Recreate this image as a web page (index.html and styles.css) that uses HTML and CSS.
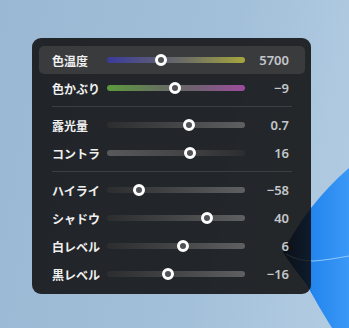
FILE: index.html
```html
<!DOCTYPE html>
<html lang="ja">
<head>
    <meta charset="UTF-8">
    <meta name="viewport" content="width=device-width, initial-scale=1.0">
    <title>調整</title>
    <link rel="stylesheet" href="styles.css">
</head>
<body>

<svg class="wallpaper" width="349" height="328" viewBox="0 0 349 328">
    <defs>
        <linearGradient id="bloom" gradientUnits="userSpaceOnUse" x1="283" y1="250" x2="349" y2="250">
            <stop offset="0" stop-color="#0b2f5c"/>
            <stop offset="0.35" stop-color="#1a6fd0"/>
            <stop offset="0.45" stop-color="#2486ee"/>
            <stop offset="1" stop-color="#3a98f6"/>
        </linearGradient>
    </defs>
    <path d="M283 252 C 292 236, 300 222, 311 208 C 322 194, 335 180, 349 168 L 349 328 L 332 328 C 322 312, 314 298, 307 285 C 298 274, 290 263, 283 252 Z" fill="url(#bloom)"/>
    <path d="M286 254 C 296 260, 306 261, 314 261 C 326 260, 338 258, 349 256" stroke="#8cc8ff" stroke-width="1.2" fill="none"/>
</svg>

<div class="panel">
    <div class="row active">
        <span class="label">色温度</span>
        <div class="track temp"><span class="thumb" style="left: 39.1%"></span></div>
        <span class="value">5700</span>
    </div>
    <div class="row">
        <span class="label">色かぶり</span>
        <div class="track tint"><span class="thumb" style="left: 49.3%"></span></div>
        <span class="value">−9</span>
    </div>

    <div class="divider"></div>

    <div class="row">
        <span class="label">露光量</span>
        <div class="track up"><span class="thumb" style="left: 59.4%"></span></div>
        <span class="value">0.7</span>
    </div>
    <div class="row">
        <span class="label">コントラ</span>
        <div class="track down"><span class="thumb" style="left: 60.1%"></span></div>
        <span class="value">16</span>
    </div>

    <div class="divider"></div>

    <div class="row">
        <span class="label">ハイライ</span>
        <div class="track up"><span class="thumb" style="left: 23.2%"></span></div>
        <span class="value">−58</span>
    </div>
    <div class="row">
        <span class="label">シャドウ</span>
        <div class="track up"><span class="thumb" style="left: 72.5%"></span></div>
        <span class="value">40</span>
    </div>
    <div class="row">
        <span class="label">白レベル</span>
        <div class="track up"><span class="thumb" style="left: 55.1%"></span></div>
        <span class="value">6</span>
    </div>
    <div class="row">
        <span class="label">黒レベル</span>
        <div class="track up"><span class="thumb" style="left: 44.2%"></span></div>
        <span class="value">−16</span>
    </div>
</div>

</body>
</html>
```

FILE: styles.css
```css
/* Basic Reset */
* {
    margin: 0;
    padding: 0;
    box-sizing: border-box;
}

body {
    width: 349px;
    height: 328px;
    overflow: hidden;
    position: relative;
    padding: 38px 0 0 32px;
    background: linear-gradient(100deg, #9ab8d3 0%, #a3c0da 60%, #b3cde2 100%);
    font-family: "Noto Sans", "Noto Sans CJK JP", sans-serif;
}

/* Desktop bloom behind the panel */
.wallpaper {
    position: absolute;
    left: 0;
    top: 0;
}

/* Translucent panel: the wallpaper shows through a little */
.panel {
    position: relative;
    width: 279px;
    padding: 8px 6px 6px 7px;
    background-color: rgba(12, 11, 11, 0.85);
    border-radius: 9px;
}

.row {
    display: grid;
    grid-template-columns: 55px 138px 1fr;
    align-items: center;
    height: 28px;
    padding: 0 16px 0 13px;
    border-radius: 5px;
}

.row.active {
    background-color: #3a3b3d;
}

.label {
    font-family: "Noto Sans CJK JP", sans-serif;
    font-size: 12px;
    font-weight: bold;
    color: #f0f0f0;
    white-space: nowrap;
}

.value {
    text-align: right;
    font-size: 13px;
    font-weight: 600;
    color: #c4c7cb;
}

/* Slider */
.track {
    position: relative;
    height: 6px;
    border-radius: 3px;
}

.track.temp {
    background: linear-gradient(90deg, #3a3a9c 0%, #5a5a78 35%, #6c6c66 55%, #a6a63e 100%);
}

.track.tint {
    background: linear-gradient(90deg, #5b9a3c 0%, #667060 40%, #6c626c 60%, #9c4c9c 100%);
}

.track.up {
    background: linear-gradient(90deg, #2c2d2f 0%, #444547 50%, #5f6062 100%);
}

.track.down {
    background: linear-gradient(90deg, #58595b 0%, #454648 50%, #2c2d2f 100%);
}

.thumb {
    position: absolute;
    top: 50%;
    width: 12px;
    height: 12px;
    margin: -6px 0 0 -6px;
    border-radius: 50%;
    border: 3.5px solid #ffffff;
    background-color: #505255;
}

.divider {
    height: 1px;
    margin: 4px 13px;
    background-color: #3b3f43;
}
```
